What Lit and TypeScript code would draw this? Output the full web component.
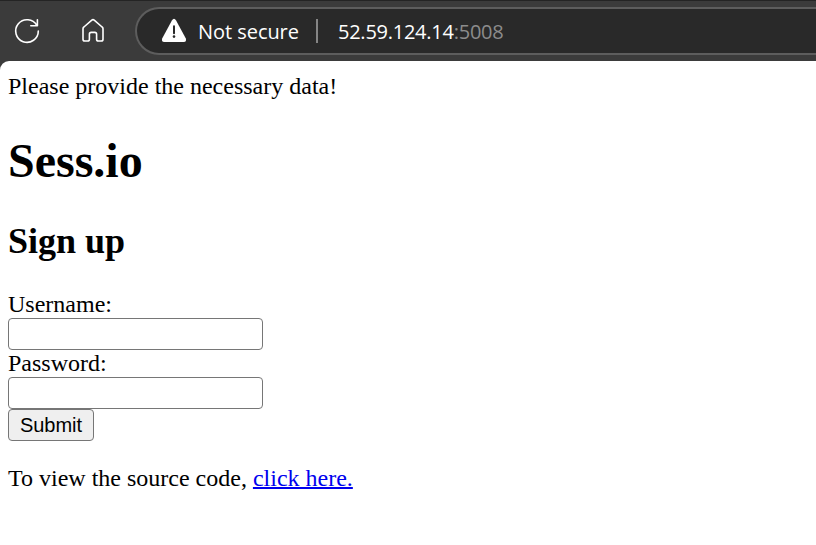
import { LitElement, html, css } from "lit";
import { customElement } from "lit/decorators.js";

@customElement("browser-bar")
class BrowserBar extends LitElement {
  static styles = css`
    :host {
      display: flex;
      box-sizing: border-box;
      height: 61px;
      padding-top: 6px;
      border-top: 1px solid #242424;
      background: #3b3b3b;
      overflow: hidden;
      font: 20px/48px "Open Sans", "Noto Sans", sans-serif;
      color: #fff;
    }
    svg { display: block; flex: none; }
    .reload { margin: 9px 0 0 12px; }
    .home { margin: 9px 0 0 36px; }
    .address {
      display: flex;
      flex: 1;
      box-sizing: border-box;
      height: 48px;
      margin: 0 -4px 0 27px;
      padding-left: 24px;
      border: 2px solid #5d5d5d;
      border-right: 0;
      border-radius: 24px 0 0 24px;
      background: #292929;
      line-height: 45px;
      white-space: nowrap;
    }
    .warning { margin-top: 8px; }
    .status { width: 118px; margin: 0 0 0 11px; letter-spacing: -0.05px; }
    .divider { width: 2px; height: 24px; margin-top: 10px; background: #858585; }
    .url { margin-left: 20px; letter-spacing: -0.25px; }
    .port { color: #8c8c8c; }
  `;

  render() {
    return html`
      <svg class="reload" width="30" height="30" viewBox="0 0 30 30" fill="none" stroke="#fff" stroke-width="1.6" stroke-linecap="round" stroke-linejoin="round">
        <path d="M26.3 15A11.3 11.3 0 1 1 24.8 9.4M25.4 3.8V9.7H18.8" />
      </svg>
      <svg class="home" width="30" height="30" viewBox="0 0 30 30" fill="none" stroke="#fff" stroke-width="1.6" stroke-linejoin="round">
        <path d="M5 12.8Q5 11.7 5.9 11L13.8 4.2Q15 3.2 16.2 4.2L24.1 11Q25 11.7 25 12.8V23.2Q25 25 23.2 25H20.4Q18.6 25 18.6 23.2V18.2Q18.6 16.4 16.8 16.4H13.2Q11.4 16.4 11.4 18.2V23.2Q11.4 25 9.6 25H6.8Q5 25 5 23.2Z" />
      </svg>
      <div class="address">
        <svg class="warning" width="26" height="27" viewBox="0 0 26 27">
          <path d="M10.9 3.4Q13 .3 15.1 3.4L24.7 21.2Q26 24.7 22.7 24.9H3.3Q0 24.7 1.3 21.2Z" fill="#fff" />
          <path d="M13 9.2V16.2" stroke="#292929" stroke-width="2" stroke-linecap="round" />
          <circle cx="13" cy="19.6" r="1.3" fill="#292929" />
        </svg>
        <span class="status">Not secure</span>
        <span class="divider"></span>
        <span class="url">52.59.124.14<span class="port">:5008</span></span>
      </div>
    `;
  }
}

@customElement("app-root")
class AppRoot extends LitElement {
  static styles = css`
    :host {
      display: block;
      height: 545px;
      overflow: hidden;
      background: #3b3b3b;
    }
    .page {
      box-sizing: border-box;
      height: 484px;
      padding: 12px 8px 0;
      border-top-left-radius: 9px;
      background: #fff;
      color: #000;
      font: 24px/27px "Liberation Serif", "Times New Roman", serif;
    }
    p, h1, h2 { margin: 0; }
    h1 { margin-top: 33px; font-size: 48px; line-height: 55px; }
    h2 { margin-top: 33px; font-size: 36px; line-height: 41px; }
    form { margin-top: 29px; }
    label { display: block; }
    input {
      display: block;
      box-sizing: border-box;
      width: 255px;
      height: 32px;
      margin: 0;
      padding: 2px 4px;
      border: 1px solid #767676;
      border-radius: 4px;
      background: #fff;
      font: 20px "Liberation Sans", Arial, sans-serif;
    }
    button {
      display: block;
      box-sizing: border-box;
      width: 86px;
      height: 32px;
      margin: 0;
      padding: 0;
      border: 1px solid #767676;
      border-radius: 4px;
      background: #efefef;
      color: #000;
      font: 20px "Liberation Sans", Arial, sans-serif;
    }
    .source { margin-top: 24px; }
    a { color: #0000ee; text-decoration-thickness: 2px; }
  `;

  render() {
    return html`
      <browser-bar></browser-bar>
      <div class="page">
        <p>Please provide the necessary data!</p>
        <h1>Sess.io</h1>
        <h2>Sign up</h2>
        <form @submit=${(e: Event) => e.preventDefault()}>
          <label for="username">Username:</label>
          <input id="username" type="text" />
          <label for="password">Password:</label>
          <input id="password" type="password" />
          <button type="submit">Submit</button>
        </form>
        <p class="source">To view the source code, <a href="#">click here.</a></p>
      </div>
    `;
  }
}
